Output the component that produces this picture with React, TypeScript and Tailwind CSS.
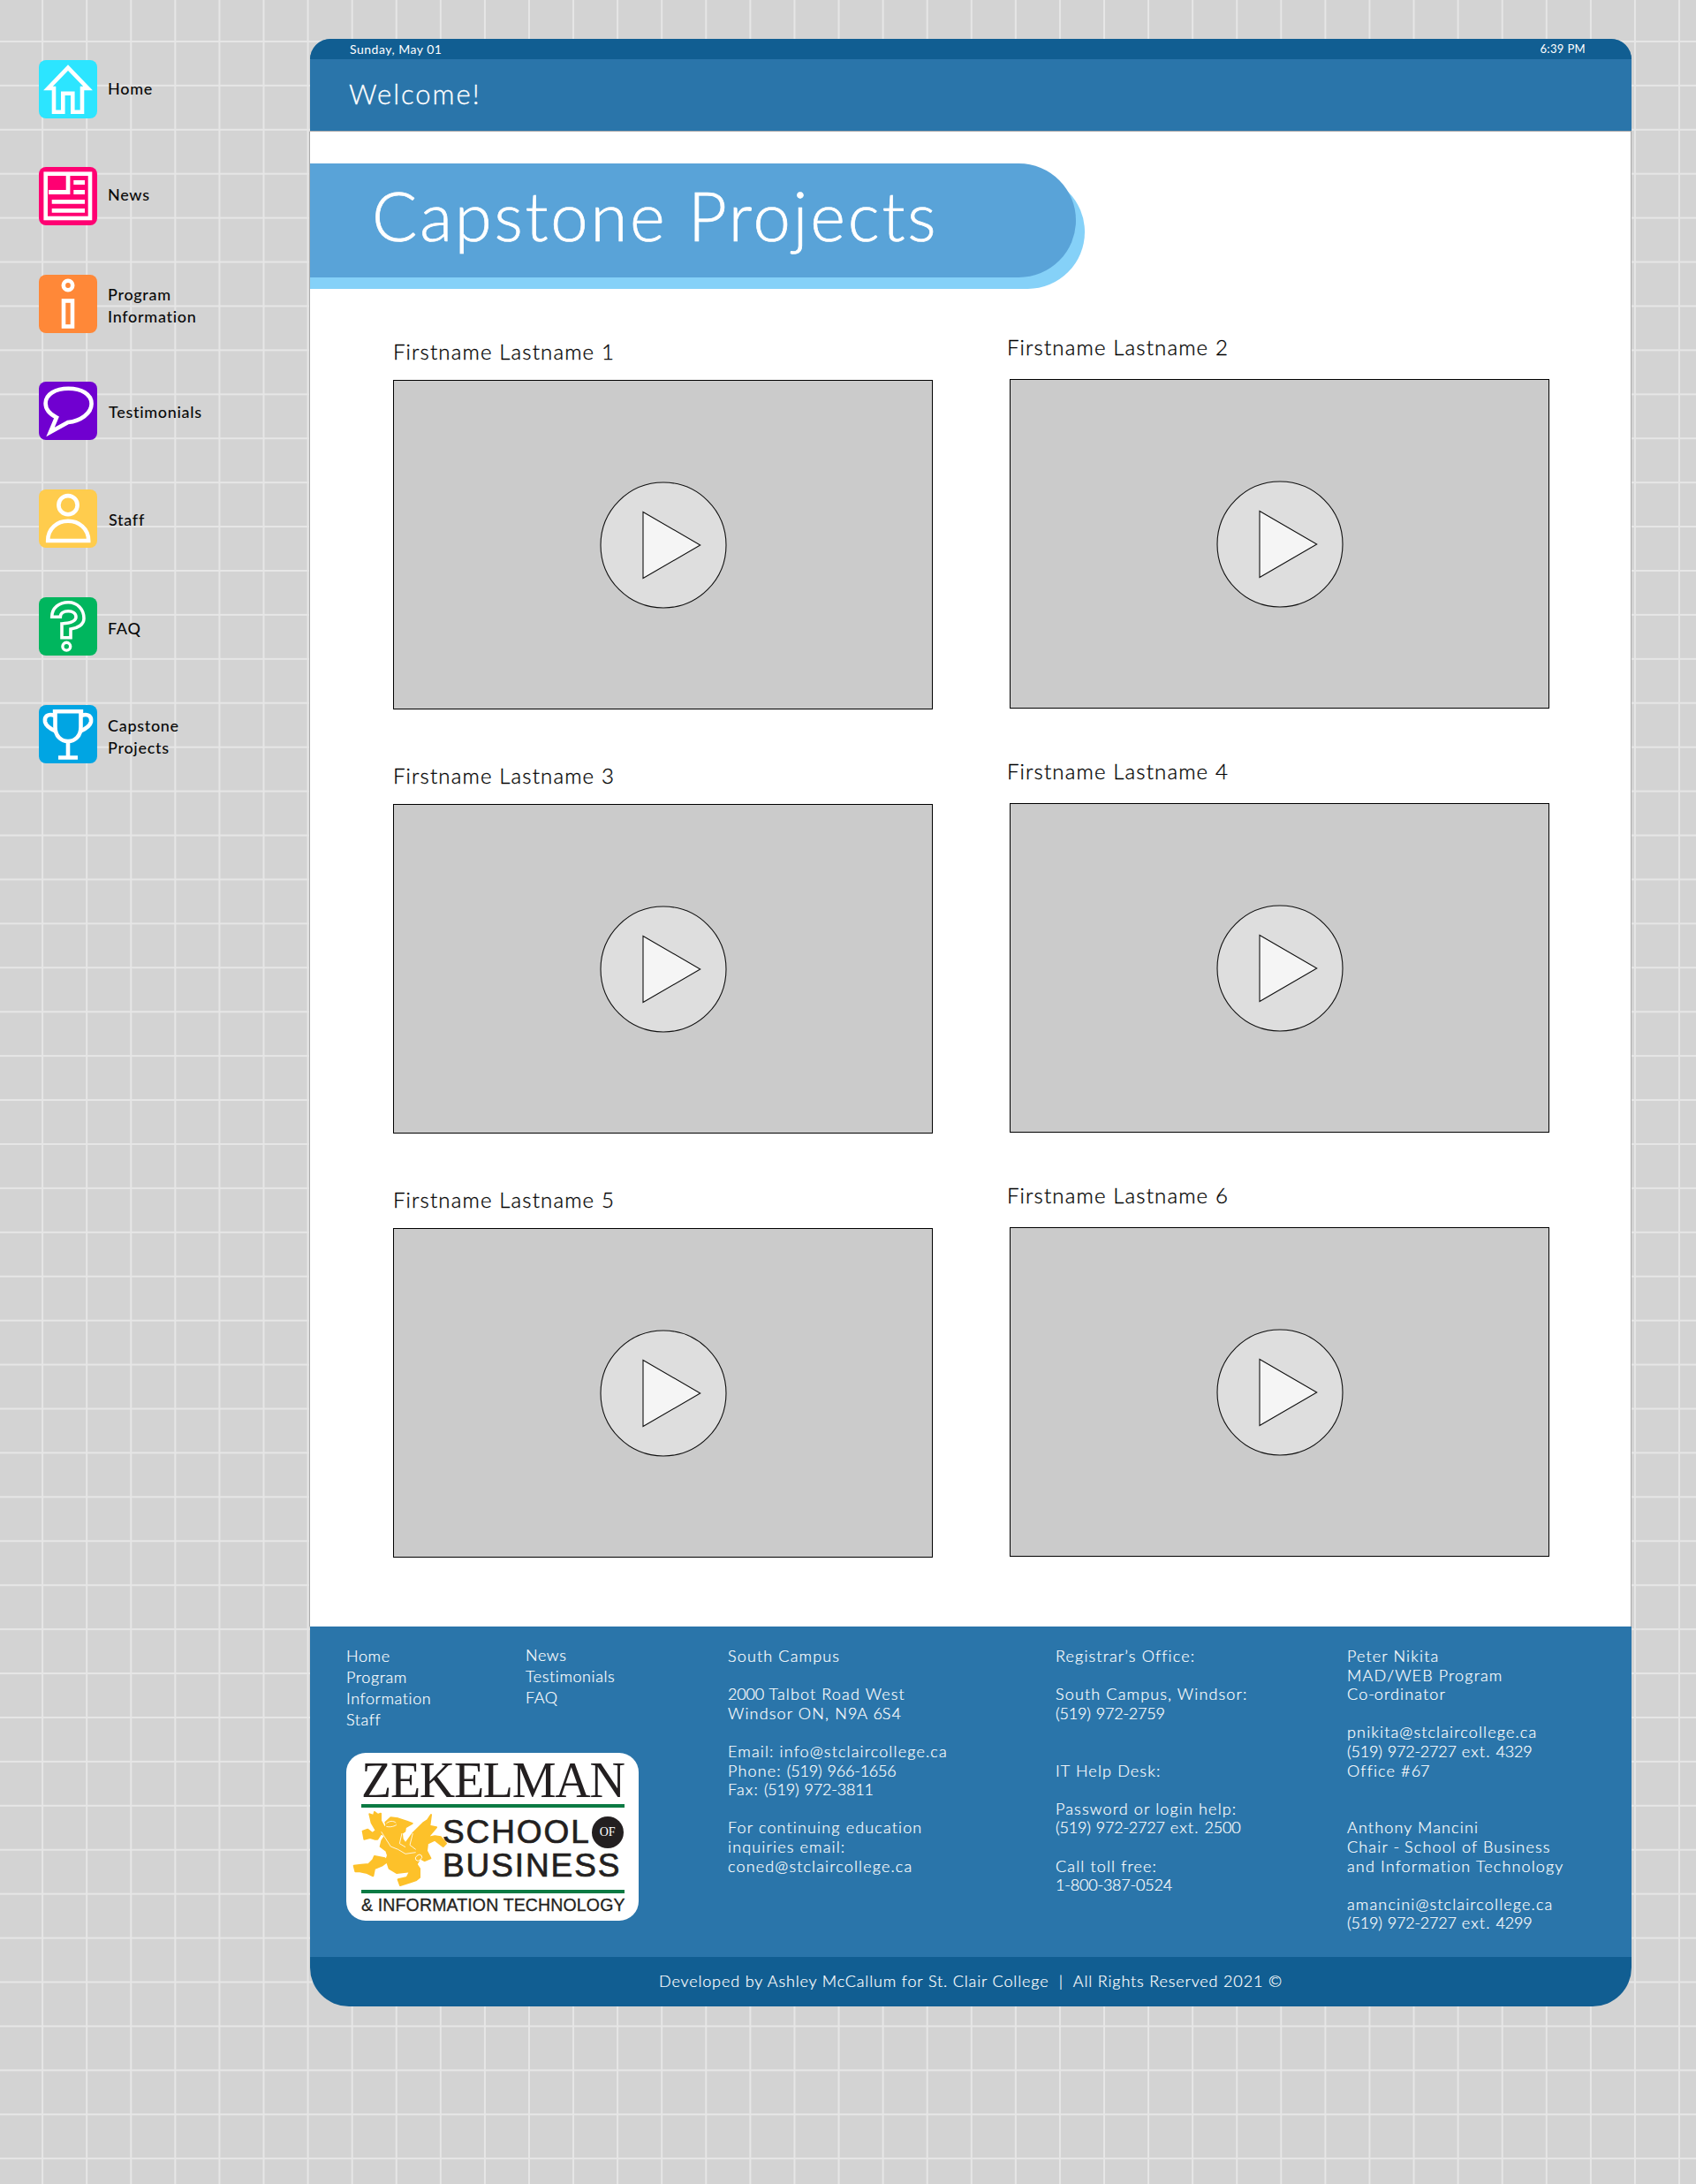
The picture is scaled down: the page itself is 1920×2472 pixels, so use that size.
const navItems = [
  { label: ["Home"], bg: "bg-[#2ce5ff]", icon: "home", cls: "mt-[24px]", tx: "pl-[12px]" },
  { label: ["News"], bg: "bg-[#ff0072]", icon: "news", cls: "mt-[55px]", tx: "pl-[12px] pb-[2px]" },
  { label: ["Program", "Information"], bg: "bg-[#ff8838]", icon: "info", cls: "mt-[56px]", tx: "pl-[12px] pt-[4px]" },
  { label: ["Testimonials"], bg: "bg-[#7000d0]", icon: "chat", cls: "mt-[55px]", tx: "pl-[13px] pt-[4px]" },
  { label: ["Staff"], bg: "bg-[#ffcc4d]", icon: "staff", cls: "mt-[56px]", tx: "pl-[13px] pt-[4px]" },
  { label: ["FAQ"], bg: "bg-[#00b65e]", icon: "faq", cls: "mt-[56px]", tx: "pl-[12px] pt-[6px]" },
  { label: ["Capstone", "Projects"], bg: "bg-[#00a5e3]", icon: "cup", cls: "mt-[56px]", tx: "pl-[12px] pt-[6px]" },
];

function NavIcon({ name }: { name: string }) {
  const common = { fill: "none", stroke: "#fff", strokeWidth: 4.6, strokeMiterlimit: 10 };
  return (
    <svg width="66" height="66" viewBox="0 0 66 66">
      {name === "home" && (
        <path {...common} d="M17 32 V58.7 H27.3 V37.7 H38.3 V58.7 H49 V32 H55.5 L33 8.6 L10.5 32 Z" />
      )}
      {name === "news" && (
        <g>
          <rect x="7.7" y="7.7" width="50.3" height="50.3" {...common} />
          <path fill="#fff" d="M30.7 10 H35.4 V31 H11 V26 H30.7 Z M39.3 15 H52 V20 H39.3 Z M39.3 26 H52 V31 H39.3 Z M14.7 37 H52 V41.7 H14.7 Z M14.7 47 H52 V51.7 H14.7 Z" />
        </g>
      )}
      {name === "info" && (
        <g>
          <circle cx="33" cy="12" r="5.2" {...common} />
          <rect x="28" y="29.5" width="10" height="29" {...common} />
        </g>
      )}
      {name === "chat" && (
        <path {...common} d="M20 40.5 C11 36 7.6 30 7.6 24.5 C7.6 14 19 7.8 33.5 7.8 C48 7.8 59.6 14 59.6 25 C59.6 36 47 44.5 33 46 L13 57 Z" />
      )}
      {name === "staff" && (
        <g>
          <circle cx="33" cy="17.7" r="10.6" {...common} />
          <path {...common} d="M10.2 58 C10.2 44 21 35.8 33 35.8 C45 35.8 56.2 44 56.2 58 Z" />
        </g>
      )}
      {name === "faq" && (
        <g>
          <path {...common} strokeWidth={3.6} d="M14.7 22.3 C14.7 12 23 5.7 33.3 5.7 C43.5 5.7 51 13.5 51 24 C51 31 44 35 36 36 V45.7 H26 V30 C34 29.5 42 28 42 22.3 C42 18 38 15.7 33.3 15.7 C28 15.7 24.3 18 24.3 22.3 Z" />
          <circle cx="31.3" cy="55.7" r="4.4" {...common} strokeWidth={3.4} />
        </g>
      )}
      {name === "cup" && (
        <g {...common}>
          <path d="M15.8 7.2 H50.2" />
          <path d="M18.5 7.2 V25 C18.5 35 25 41 33 41 C41 41 47.5 35 47.5 25 V7.2" />
          <path d="M33 41 V59.5 M22 59.5 H44" />
          <path d="M18 12 C10 9 6 13 7 19 C8 24 13 27 19.5 30" />
          <path d="M48 12 C56 9 60 13 59 19 C58 24 53 27 46.5 30" />
        </g>
      )}
    </svg>
  );
}

function Sidebar() {
  return (
    <aside className="w-[350px] shrink-0 pl-[44px] pt-[44px]">
      {navItems.map((n) => (
        <div key={n.icon} className={`flex items-center ${n.cls}`}>
          <div className={`w-[66px] h-[66px] rounded-[8px] shrink-0 ${n.bg}`}>
            <NavIcon name={n.icon} />
          </div>
          <div className={`${n.tx} text-[18px] leading-[25.5px] font-medium tracking-[0.7px] text-[#0a0a0a]`}>
            {n.label.map((l) => (
              <div key={l}>{l}</div>
            ))}
          </div>
        </div>
      ))}
    </aside>
  );
}

function VideoCard({ name, right }: { name: string; right: boolean }) {
  return (
    <div className={right ? "mb-[56px]" : "mb-[60px]"}>
      <div
        className={`h-[30px] text-[24px] leading-[29px] font-light tracking-[1.15px] text-black [-webkit-text-stroke:0.3px_#000] whitespace-nowrap ${
          right ? "-ml-[3px] mb-[21px]" : "mb-[17px]"
        }`}
      >
        {name}
      </div>
      <div className="w-[611px] h-[373px] border border-black bg-[#cbcbcb] flex items-center justify-center">
        <svg width="144" height="144" viewBox="-72 -72 144 144">
          <circle r="71" fill="#dedede" stroke="#111" strokeWidth="1.1" />
          <path d="M-23 -37.5 L41.7 0 L-23 37.5 Z" fill="#f5f5f5" stroke="#111" strokeWidth="1.1" />
        </svg>
      </div>
    </div>
  );
}

const leftCards = ["Firstname Lastname 1", "Firstname Lastname 3", "Firstname Lastname 5"];
const rightCards = ["Firstname Lastname 2", "Firstname Lastname 4", "Firstname Lastname 6"];

function Griffin() {
  return (
    <svg width="108" height="85" viewBox="10 30 324 255" className="shrink-0">
      <g fill="#fdc12a" stroke="#fdc12a" strokeWidth="6" strokeLinejoin="round">
        <path d="M68 40 L82 45 L85 33 L97 42 L106 38 L106 62 L120 88 L125 78 L122 68 L140 52 L165 55 L195 65 L213 72 L190 85 L188 98 L178 105 L180 125 L190 140 L215 105 L250 70 L265 60 L277 42 L272 80 L295 85 L265 120 L290 115 L310 118 L328 140 L318 150 L305 140 L290 128 L265 140 L262 165 L275 190 L255 198 L240 190 L228 210 L238 225 L238 255 L225 265 L205 272 L172 282 L165 262 L195 255 L205 235 L160 240 L135 225 L125 195 L130 180 L125 165 L105 150 L110 130 L120 115 L108 105 L95 125 L85 125 L70 120 L50 125 L45 98 L62 92 L78 105 L90 95 L75 70 Z" />
        <path d="M15 215 L40 212 L65 210 L80 195 L85 183 L120 190 L130 200 L110 215 L85 225 L80 250 L60 240 L35 235 L20 235 Z" />
      </g>
      <g fill="none" stroke="#fff" strokeWidth="2.5">
        <path d="M125 72 C135 62 150 62 158 70 M125 82 C140 86 155 80 160 76" />
        <path d="M108 100 L140 150 L165 160 L190 175 L225 170" />
        <path d="M178 105 L170 140 L190 152 M215 105 L205 145 L225 160" />
        <ellipse cx="235" cy="188" rx="12" ry="9" transform="rotate(-40 235 188)" />
      </g>
    </svg>
  );
}

function Logo() {
  return (
    <div className="mt-[26px] w-[331px] h-[190px] rounded-[22px] bg-white px-[17px] pt-[8px] overflow-hidden text-[#231f20] font-['Liberation_Sans',sans-serif] [-webkit-text-stroke:0]">
      <div className="h-[46px] text-[56px] leading-[46px] tracking-[-1.3px] whitespace-nowrap font-['Liberation_Serif',serif]">ZEKELMAN</div>
      <div className="mt-[4px] h-[4px] w-[298px] bg-[#0b7a43]" />
      <div className="flex h-[93px]">
        <div className="-ml-[10px] mt-[4px]">
          <Griffin />
        </div>
        <div className="-ml-[6px] pt-[9px] text-[37px] leading-[38px] [-webkit-text-stroke:0.7px_#231f20]">
          <div className="flex items-center h-[38px] whitespace-nowrap tracking-[1.9px]">
            SCHOOL
            <span className="ml-[1px] w-[36px] h-[36px] rounded-full bg-[#231f20] text-white text-[14px] leading-[36px] text-center tracking-normal font-['Liberation_Serif',serif] [-webkit-text-stroke:0]">OF</span>
          </div>
          <div className="whitespace-nowrap tracking-[1.9px]">BUSINESS</div>
        </div>
      </div>
      <div className="h-[4px] w-[298px] bg-[#0b7a43]" />
      <div className="mt-[2px] text-[19.5px] leading-[22px] whitespace-nowrap tracking-[0.15px] [-webkit-text-stroke:0.3px_#231f20]">&amp; INFORMATION TECHNOLOGY</div>
    </div>
  );
}

const col3 = ["South Campus", "", "2000 Talbot Road West", "Windsor ON, N9A 6S4", "", "Email: info@stclaircollege.ca", "Phone: (519) 966-1656", "Fax: (519) 972-3811", "", "For continuing education", "inquiries email:", "coned@stclaircollege.ca"];
const col4 = ["Registrar’s Office:", "", "South Campus, Windsor:", "(519) 972-2759", "", "", "IT Help Desk:", "", "Password or login help:", "(519) 972-2727 ext. 2500", "", "Call toll free:", "1-800-387-0524"];
const col5 = ["Peter Nikita", "MAD/WEB Program", "Co-ordinator", "", "pnikita@stclaircollege.ca", "(519) 972-2727 ext. 4329", "Office #67", "", "", "Anthony Mancini", "Chair - School of Business", "and Information Technology", "", "amancini@stclaircollege.ca", "(519) 972-2727 ext. 4299"];

function Digits({ text }: { text: string }) {
  return (
    <>
      {text.split(/([\d()\-]+)/).map((part, i) =>
        i % 2 === 1 ? (
          <span key={i} className="tracking-[-0.2px]">
            {part}
          </span>
        ) : (
          <span key={i}>{part}</span>
        ),
      )}
    </>
  );
}

function Lines({ lines, cls }: { lines: string[]; cls: string }) {
  return (
    <div className={`tracking-[1.15px] ${cls}`}>
      {lines.map((l, i) => (
        <div key={i} className="h-[21.6px] leading-[21px] whitespace-nowrap">
          <Digits text={l} />
        </div>
      ))}
    </div>
  );
}

export default function App() {
  return (
    <div className="min-h-[2472px] flex font-['Lato',sans-serif] bg-[#d3d3d3] bg-[linear-gradient(to_right,transparent_47px,#e6e6e6_47px,#e6e6e6_49px,transparent_49px),linear-gradient(to_bottom,transparent_46px,#e6e6e6_46px,#e6e6e6_48px,transparent_48px)] bg-[length:50.08px_49.93px]">
      <Sidebar />
      <div className="w-[1497px] mt-[44px] mb-[201px] shrink-0">
        <header className="ml-[1px] rounded-t-[24px] bg-[#2a75aa] text-white">
          <div className="h-[23px] rounded-t-[24px] bg-[#115e92] flex items-center justify-between pl-[45px] pr-[52px] tracking-[0.35px]">
            <span className="text-[14px] tracking-[0.5px]">Sunday, May 01</span>
            <span className="text-[13px]">6:39 PM</span>
          </div>
          <div className="h-[82px] pl-[44px] pt-[21px] text-[31px] leading-[36px] font-light tracking-[2px] [-webkit-text-stroke:0.3px_#fff] border-b border-[#aaa]">Welcome!</div>
        </header>
        <main className="bg-white border-x border-[#aaa] h-[1692px] pt-[36px] overflow-hidden">
          <div className="-ml-[10px] w-[877px] h-[129px] rounded-r-[65px] bg-[#59a3d8] shadow-[10px_13px_0_#85d1f8] pl-[80px] text-white text-[76px] leading-[118px] font-light tracking-[2.8px] [-webkit-text-stroke:0.7px_#fff] whitespace-nowrap">
            Capstone Projects
          </div>
          <div className="flex pl-[94px] mt-[13px]">
            <div className="w-[698px] pt-[56px]">
              {leftCards.map((c) => (
                <VideoCard key={c} name={c} right={false} />
              ))}
            </div>
            <div className="pt-[51px]">
              {rightCards.map((c) => (
                <VideoCard key={c} name={c} right />
              ))}
            </div>
          </div>
        </main>
        <footer className="ml-[1px] text-white text-[18px] font-light tracking-[0.6px] [-webkit-text-stroke:0.2px_#fff]">
          <div className="h-[374px] bg-[#2a75aa] flex pl-[41px] pt-[23px]">
            <div className="w-[432px] -mt-[2px]">
              <div className="flex">
                <div className="w-[203px] leading-[24px]">
                  <div>Home</div>
                  <div>Program</div>
                  <div>Information</div>
                  <div>Staff</div>
                </div>
                <div className="leading-[24px] -mt-[1px]">
                  <div>News</div>
                  <div>Testimonials</div>
                  <div>FAQ</div>
                </div>
              </div>
              <Logo />
            </div>
            <Lines lines={col3} cls="w-[371px]" />
            <Lines lines={col4} cls="w-[330px]" />
            <Lines lines={col5} cls="" />
          </div>
          <div className="h-[56px] rounded-b-[44px] bg-[#115e92] flex items-center justify-center tracking-[0.85px] pb-[2px]">
            Developed by Ashley McCallum for St. Clair College&nbsp;&nbsp;|&nbsp;&nbsp;All Rights Reserved 2021 ©
          </div>
        </footer>
      </div>
    </div>
  );
}
